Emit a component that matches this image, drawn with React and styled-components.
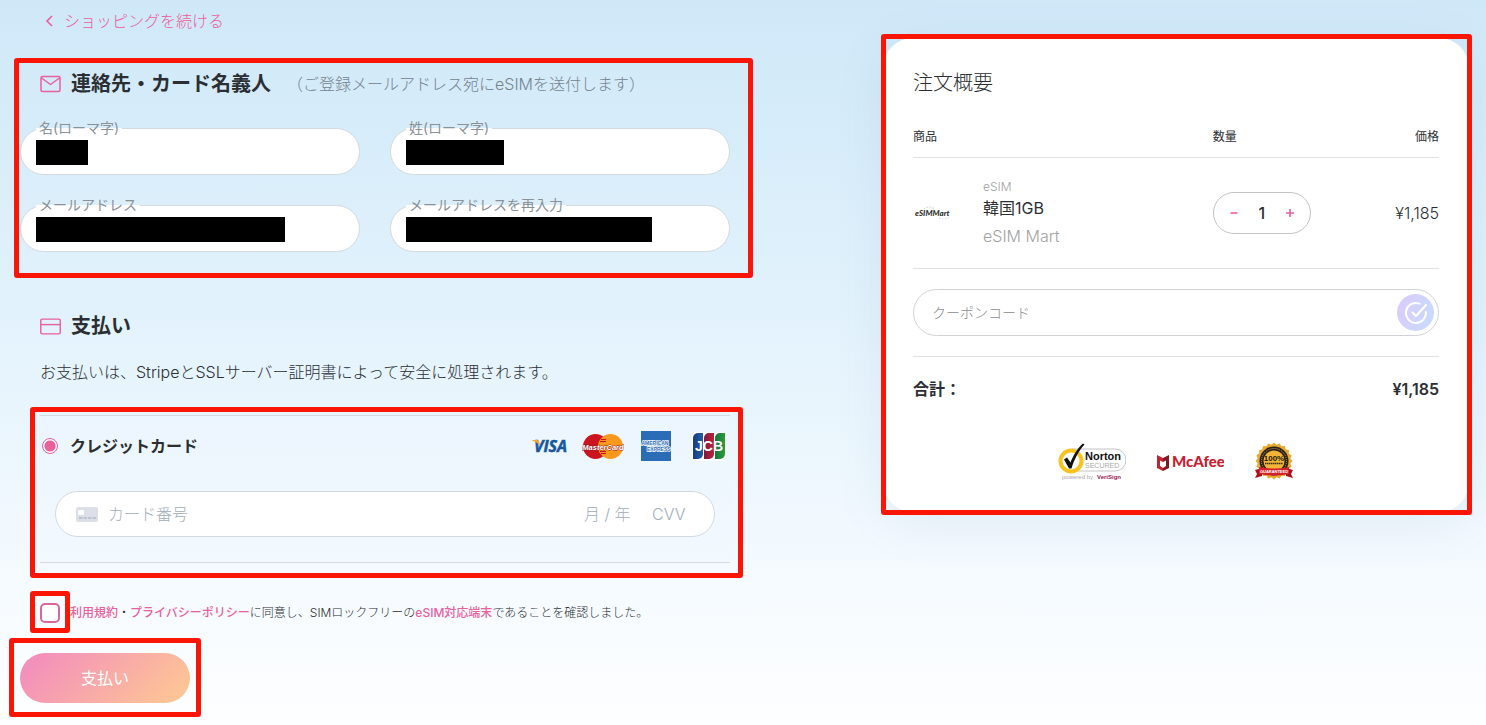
import { useState } from 'react';
import styled, { createGlobalStyle, css } from 'styled-components';

const PINK = '#e8609c';
const LINE = '#d4d9dd';

const GlobalStyle = createGlobalStyle`
  * {
    box-sizing: border-box;
  }

  body {
    margin: 0;
    font-family: Inter, 'Noto Sans CJK JP', sans-serif;
    font-size: 16px;
    font-weight: 300;
    line-height: 24px;
    color: #2b2f33;
  }

  button,
  input {
    font: inherit;
    color: inherit;
  }
`;

// red marker frame drawn over a block
const frame = (top, right, bottom, left) => css`
  position: relative;

  &::after {
    content: '';
    position: absolute;
    top: -${top}px;
    right: -${right}px;
    bottom: -${bottom}px;
    left: -${left}px;
    border: 5px solid #fb1505;
    border-radius: 3px;
    pointer-events: none;
  }
`;

const Page = styled.div`
  display: grid;
  grid-template-columns: 710fr 586fr;
  column-gap: 153px;
  align-items: start;
  min-height: 100vh;
  padding: 0 17px 20px 20px;
  background: linear-gradient(#cfe8f8 0%, #e2f2fc 43%, #f6fbff 82%, #fdfeff 100%);
`;

const Main = styled.main`
  padding-top: 9px;
`;

const BackLink = styled.a`
  display: inline-flex;
  align-items: center;
  gap: 10px;
  margin-left: 24px;
  color: ${PINK};
  text-decoration: none;
  vertical-align: top;
`;

const Contact = styled.section`
  margin-top: 36px;
  ${frame(11, 23, 26, 6)}
`;

const SectionHead = styled.header`
  display: flex;
  align-items: center;
  gap: 10px;
  padding-left: 20px;
  line-height: 30px;
`;

const SectionTitle = styled.h2`
  margin: 0;
  font-size: 20px;
  font-weight: 700;
`;

const Hint = styled.span`
  margin-left: 6px;
  color: #74838f;
`;

const Fields = styled.div`
  display: grid;
  grid-template-columns: 1fr 1fr;
  gap: 30px;
  margin-top: 29px;
`;

const Field = styled.label`
  position: relative;
  display: block;
`;

const FieldName = styled.span`
  position: absolute;
  top: -10px;
  left: 16px;
  padding: 0 3px;
  font-size: 14px;
  font-weight: 400;
  line-height: 20px;
  color: #8a9197;
  background: linear-gradient(transparent 50%, #fff 50%);
`;

const FieldInput = styled.input`
  display: block;
  width: 100%;
  height: 47px;
  padding: 0 20px;
  border: 1px solid ${LINE};
  border-radius: 24px;
  background: #fff;
  outline: none;
`;

const Redaction = styled.span`
  position: absolute;
  top: 12px;
  left: 16px;
  width: ${(p) => p.$width}px;
  height: 25px;
  background: #000;
`;

const Payment = styled.section`
  margin-top: 59px;
`;

const Note = styled.p`
  margin: 19px 0 31px 20px;
`;

const Method = styled.div`
  margin-left: 20px;
  padding: 15px 0 25px;
  border-top: 1px solid ${LINE};
  border-bottom: 1px solid ${LINE};
  background: rgba(240, 246, 255, 0.35);
  ${frame(9, 13, 16, 10)}
`;

const MethodHead = styled.div`
  display: flex;
  align-items: center;
  justify-content: space-between;
  height: 30px;
`;

const MethodLabel = styled.label`
  display: flex;
  align-items: center;
  gap: 12px;
  padding-left: 2px;
  font-weight: 700;
`;

const Radio = styled.input`
  appearance: none;
  width: 16px;
  height: 16px;
  margin: 0;
  border: 1px solid ${PINK};
  border-radius: 50%;
  background: radial-gradient(${PINK} 5px, #fff 6px);
`;

const Brands = styled.div`
  display: flex;
  gap: 11px;
`;

const CardField = styled.div`
  display: flex;
  align-items: center;
  height: 46px;
  margin: 30px 15px 0;
  padding: 0 20px;
  border: 1px solid ${LINE};
  border-radius: 23px;
  background: #fff;
`;

const CardInput = styled.input`
  flex: ${(p) => (p.$width ? 'none' : '1')};
  width: ${(p) => (p.$width ? `${p.$width}px` : 'auto')};
  min-width: 0;
  padding: 0;
  border: 0;
  background: none;
  outline: none;

  &::placeholder {
    color: #a2adb8;
    opacity: 1;
  }
`;

const CardGlyph = styled.svg`
  flex: none;
  margin-right: 10px;
`;

const Terms = styled.div`
  display: flex;
  align-items: center;
  gap: 10px;
  height: 20px;
  margin: 40px 0 30px 20px;
  font-size: 12px;
`;

const TermsBox = styled.span`
  flex: none;
  height: 20px;
  ${frame(12, 10, 10, 10)}
`;

const Checkbox = styled.input`
  appearance: none;
  display: block;
  width: 20px;
  height: 20px;
  margin: 0;
  border: 2px solid #d9679f;
  border-radius: 5px;
  background: #fff;

  &:checked {
    background: ${PINK};
  }
`;

const TermsLink = styled.a`
  font-weight: 500;
  color: ${PINK};
  text-decoration: none;
`;

const PayWrap = styled.div`
  width: fit-content;
  ${frame(15, 11, 14, 11)}
`;

const PayButton = styled.button`
  display: block;
  width: 170px;
  height: 50px;
  border: 0;
  border-radius: 25px;
  color: #fff;
  font-weight: 400;
  background: linear-gradient(135deg, #f390bb 10%, #fdc496 90%);
  cursor: pointer;
`;

const Summary = styled.aside`
  margin-top: 38px;
  padding: 30px;
  border-radius: 30px;
  background: #fff;
  box-shadow: 0 10px 50px rgba(90, 120, 160, 0.1);
  ${frame(4, 3, 3, 2)}
`;

const SummaryTitle = styled.h2`
  margin: 0 0 30px;
  font-size: 20px;
  font-weight: 300;
  line-height: 30px;
`;

const Items = styled.table`
  width: 100%;
  table-layout: fixed;
  border-spacing: 0;
`;

const Th = styled.th`
  width: ${(p) => p.$width};
  padding: 0 0 11px;
  border-bottom: 1px solid #e2e2e2;
  font-size: 12px;
  font-weight: 400;
  line-height: 18px;
  text-align: ${(p) => p.$align || 'left'};
`;

const Td = styled.td`
  padding: 20px 0;
  border-bottom: 1px solid #e2e2e2;
  text-align: ${(p) => p.$align || 'left'};
`;

const Product = styled.div`
  display: grid;
  grid-template-columns: 40px 1fr;
  column-gap: 30px;
  align-items: center;
`;

const Kind = styled.div`
  font-size: 12px;
  line-height: 18px;
  color: #a2a2a2;
`;

const Name = styled.div`
  font-weight: 400;
`;

const Maker = styled.div`
  margin-top: 4px;
  color: #a2a2a2;
`;

const Stepper = styled.div`
  display: flex;
  align-items: center;
  justify-content: space-between;
  width: 98px;
  height: 42px;
  padding: 0 10px;
  border: 1px solid #c4c4c4;
  border-radius: 21px;
  font-weight: 500;
`;

const StepButton = styled.button`
  display: grid;
  place-items: center;
  width: 20px;
  height: 20px;
  padding: 0;
  border: 0;
  background: none;
  cursor: pointer;
`;

const Coupon = styled.form`
  display: flex;
  align-items: center;
  height: 47px;
  margin: 20px 0;
  padding: 0 4px 0 18px;
  border: 1px solid #d0d3d6;
  border-radius: 24px;
`;

const CouponInput = styled.input`
  flex: 1;
  min-width: 0;
  padding: 0;
  border: 0;
  font-size: 14px;
  outline: none;

  &::placeholder {
    color: #8c8c8c;
    opacity: 1;
  }
`;

const CouponButton = styled.button`
  display: grid;
  place-items: center;
  width: 37px;
  height: 37px;
  padding: 0;
  border: 0;
  border-radius: 50%;
  background: linear-gradient(110deg, #dccbfb, #c6dcfc);
  cursor: pointer;
`;

const Total = styled.div`
  display: flex;
  justify-content: space-between;
  padding-top: 20px;
  border-top: 1px solid #e2e2e2;
  font-weight: 600;
`;

const Badges = styled.div`
  display: flex;
  justify-content: center;
  gap: 30px;
  height: 40px;
  margin-top: 41px;
`;

const SANS = "'Liberation Sans', sans-serif";

const ChevronIcon = () => (
  <svg width="10" height="14" viewBox="0 0 10 14" fill="none" stroke={PINK} strokeWidth="1.6">
    <path d="M8 2 3 7l5 5" />
  </svg>
);

const MailIcon = () => (
  <svg width="21" height="18" viewBox="0 0 21 18" fill="none" stroke={PINK} strokeWidth="1.5">
    <rect x="1" y="1.5" width="19" height="15" rx="1.5" />
    <path d="M1.5 3l9 6.5 9-6.5" strokeLinejoin="round" />
  </svg>
);

const CreditIcon = () => (
  <svg width="21" height="17" viewBox="0 0 22 17" fill="none" stroke={PINK} strokeWidth="1.5">
    <rect x=".8" y=".8" width="20.4" height="15.4" rx="1.5" />
    <path d="M1 6.5h20" />
  </svg>
);

const CheckIcon = () => (
  <svg width="24" height="24" viewBox="0 0 24 24" fill="none" stroke="#fff" strokeWidth="2" strokeLinecap="round" strokeLinejoin="round">
    <path d="M15.5 2.6A10 10 0 1 0 21.900 11" />
    <path d="M8.500 11.500l3.500 3.500L22 4" />
  </svg>
);

const MinusIcon = () => (
  <svg width="8" height="8" viewBox="0 0 8 8" stroke={PINK} strokeWidth="1.6">
    <path d="M0.500 4h7" />
  </svg>
);

const PlusIcon = () => (
  <svg width="8" height="8" viewBox="0 0 8 8" stroke={PINK} strokeWidth="1.6">
    <path d="M0 4h8M4 0v8" />
  </svg>
);

const Visa = () => (
  <svg width="42" height="30" viewBox="0 0 42 30" role="img" aria-label="VISA">
    <text x="5" y="21" fontFamily="'Open Sans', sans-serif" fontSize="16" fontWeight="700" fontStyle="italic" fill="#17579f" stroke="#17579f" strokeWidth=".5">
      VISA
    </text>
    <path d="M3 9h5q2 0 2.300 2l.9 4Q8.500 11 3 9.500z" fill="#f2a832" />
  </svg>
);

const MasterCard = () => (
  <svg width="42" height="30" viewBox="0 0 42 30" role="img" aria-label="MasterCard">
    <circle cx="13.500" cy="15.500" r="12.500" fill="#cc1420" />
    <circle cx="28.500" cy="15.500" r="12.500" fill="#f8991d" />
    <path d="M19 8.500h5M18 10.500h6M18 20.500h6M19 22.500h5" stroke="#cc1420" />
    <text x="21" y="18.500" textAnchor="middle" fontFamily={SANS} fontSize="7.500" fontWeight="700" fontStyle="italic" fill="#fff" stroke="#8d1b20" strokeWidth=".8" paintOrder="stroke">
      MasterCard
    </text>
  </svg>
);

const Amex = () => (
  <svg width="42" height="30" viewBox="0 0 42 30" role="img" aria-label="American Express">
    <rect x="6" width="30" height="30" fill="#2a6cb6" />
    <g fontFamily={SANS} fontSize="5" fontWeight="700" fill="#2a6cb6" stroke="#fff" strokeWidth="1.300" paintOrder="stroke">
      <text x="6.500" y="14">AMERICAN</text>
      <text x="12" y="20">EXPRESS</text>
    </g>
  </svg>
);

const Jcb = () => (
  <svg width="42" height="30" viewBox="0 0 42 30" role="img" aria-label="JCB">
    <defs>
      <linearGradient id="jcbBlue"><stop stopColor="#173a80" /><stop offset="1" stopColor="#1f5fa8" /></linearGradient>
      <linearGradient id="jcbRed"><stop stopColor="#7c1c3c" /><stop offset="1" stopColor="#c0203c" /></linearGradient>
      <linearGradient id="jcbGreen"><stop stopColor="#0f7a3c" /><stop offset="1" stopColor="#2f9a3a" /></linearGradient>
    </defs>
    <rect x="4" y="1" width="34" height="29" rx="5" fill="#fff" />
    <path d="M5 7a5 5 0 0 1 5-5h5v21a5 5 0 0 1-5 5H5z" fill="url(#jcbBlue)" />
    <path d="M16 7a5 5 0 0 1 5-5h5v21a5 5 0 0 1-5 5h-5z" fill="url(#jcbRed)" />
    <path d="M27 7a5 5 0 0 1 5-5h5v21a5 5 0 0 1-5 5h-5z" fill="url(#jcbGreen)" />
    <text x="21" y="20" textAnchor="middle" fontFamily={SANS} fontSize="14" fontWeight="700" fill="#fff">
      JCB
    </text>
  </svg>
);

const MartLogo = () => (
  <svg width="40" height="20" viewBox="0 0 40 20" role="img" aria-label="eSIM Mart">
    <text x="2" y="13" fontFamily="Lato, sans-serif" fontSize="8" fontWeight="900" fontStyle="italic" fill="#333">
      eSIMMart
    </text>
    <path d="M11 6q5-4 11 0" fill="none" stroke="#b8c8a0" strokeWidth=".8" strokeDasharray="1.500 1.500" />
    <path d="M26 15q6 2 11-1" fill="none" stroke="#b5c6ea" strokeWidth=".8" strokeDasharray="1.500 1.500" />
  </svg>
);

const Norton = () => (
  <svg width="68" height="40" viewBox="0 0 68 40" role="img" aria-label="Norton Secured">
    <path d="M14 7h43a11 11 0 0 1 0 22H14" fill="none" stroke="#c4c4c4" />
    <circle cx="13" cy="19" r="10.500" fill="#fff" stroke="#f7c31c" strokeWidth="4" />
    <path d="M6 17.500l3-2 3.500 5C15 14 19.500 6 25 1.500l1.500 1C20.500 9 16 18 13.500 26.500H11z" fill="#111" />
    <text x="27" y="18" fontFamily={SANS} fontSize="11" fontWeight="700" fill="#111">Norton</text>
    <text x="27" y="26" fontFamily={SANS} fontSize="7" fill="#a8a8a8">SECURED</text>
    <text x="4" y="37" fontFamily={SANS} fontSize="6" fill="#a8a8a8">powered by</text>
    <text x="39" y="37" fontFamily={SANS} fontSize="6" fontWeight="700" fill="#9b2257">VeriSign</text>
  </svg>
);

const McAfee = () => (
  <svg width="68" height="40" viewBox="0 0 68 40" role="img" aria-label="McAfee">
    <path d="M1 13l6 3v4L4 18.500V24l3 2v3l-6-3z" fill="#c8202f" />
    <path d="M13 13l-6 3v4l3-1.500V24l-3 2v3l6-3z" fill="#7d1a22" />
    <text x="16" y="25" fontFamily="Lato, sans-serif" fontSize="15" fontWeight="900" fill="#c8202f">McAfee</text>
  </svg>
);

const spikes = Array.from({ length: 40 }, (_, i) => {
  const r = i % 2 ? 16.5 : 18.5;
  const a = (i * Math.PI) / 20;
  return `${20 + r * Math.sin(a)},${19 - r * Math.cos(a)}`;
}).join(' ');

const Seal = () => (
  <svg width="40" height="40" viewBox="0 0 40 40" role="img" aria-label="100% guaranteed">
    <polygon points={spikes} fill="#e8a92c" />
    <circle cx="20" cy="19" r="14.500" fill="#2b2118" />
    <circle cx="20" cy="19" r="12.500" fill="none" stroke="#c9a053" strokeWidth="1" strokeDasharray="1 1" />
    <circle cx="20" cy="19" r="10.500" fill="#f0b536" />
    <text x="20" y="19" textAnchor="middle" fontFamily={SANS} fontSize="8" fontWeight="700" fill="#1d1712">100%</text>
    <path d="M11 21.500h18" stroke="#3c2d18" strokeWidth="1.500" strokeDasharray="1.500 .5" />
    <path d="M1 28l7-2v8l-7 2 2-4zM39 28l-7-2v8l7 2-2-4z" fill="#a5131b" />
    <path d="M5 25q15 3 30 0v7q-15 3-30 0z" fill="#d8202a" />
    <text x="20" y="31" textAnchor="middle" fontFamily={SANS} fontSize="4" fontWeight="700" fill="#fff">GUARANTEED</text>
  </svg>
);

const contactFields = [
  { id: 'first', label: '名(ローマ字)', mask: 52 },
  { id: 'last', label: '姓(ローマ字)', mask: 98 },
  { id: 'email', label: 'メールアドレス', mask: 249 },
  { id: 'email2', label: 'メールアドレスを再入力', mask: 246 },
];

const App = () => {
  const [count, setCount] = useState(1);
  const price = `¥${(1185 * count).toLocaleString('en-US')}`;

  return (
    <>
      <GlobalStyle />
      <Page>
        <Main>
          <BackLink href="#shop">
            <ChevronIcon />
            ショッピングを続ける
          </BackLink>

          <Contact>
            <SectionHead>
              <MailIcon />
              <SectionTitle>連絡先・カード名義人</SectionTitle>
              <Hint>（ご登録メールアドレス宛にeSIMを送付します）</Hint>
            </SectionHead>
            <Fields>
              {contactFields.map((field) => (
                <Field key={field.id}>
                  <FieldInput name={field.id} />
                  <FieldName>{field.label}</FieldName>
                  <Redaction $width={field.mask} />
                </Field>
              ))}
            </Fields>
          </Contact>

          <Payment>
            <SectionHead>
              <CreditIcon />
              <SectionTitle>支払い</SectionTitle>
            </SectionHead>
            <Note>お支払いは、StripeとSSLサーバー証明書によって安全に処理されます。</Note>
            <Method>
              <MethodHead>
                <MethodLabel>
                  <Radio type="radio" name="method" defaultChecked />
                  クレジットカード
                </MethodLabel>
                <Brands>
                  <Visa />
                  <MasterCard />
                  <Amex />
                  <Jcb />
                </Brands>
              </MethodHead>
              <CardField>
                <CardGlyph width="22" height="15" viewBox="0 0 22 15">
                  <rect width="22" height="15" rx="2" fill="#dcdfe8" />
                  <rect x="2" y="3" width="6" height="5" rx="1" fill="#fff" />
                  <path d="M3 11h17" stroke="#b3bac8" strokeWidth="1.5" strokeDasharray="3.5 1" />
                </CardGlyph>
                <CardInput placeholder="カード番号" aria-label="カード番号" />
                <CardInput $width={68} placeholder="月 / 年" aria-label="月 / 年" />
                <CardInput $width={42} placeholder="CVV" aria-label="CVV" />
              </CardField>
            </Method>
          </Payment>

          <Terms>
            <TermsBox>
              <Checkbox type="checkbox" id="agree" />
            </TermsBox>
            <label htmlFor="agree">
              <TermsLink href="#terms">利用規約</TermsLink>・
              <TermsLink href="#privacy">プライバシーポリシー</TermsLink>
              に同意し、SIMロックフリーの
              <TermsLink href="#devices">eSIM対応端末</TermsLink>
              であることを確認しました。
            </label>
          </Terms>

          <PayWrap>
            <PayButton type="button">支払い</PayButton>
          </PayWrap>
        </Main>

        <Summary>
          <SummaryTitle>注文概要</SummaryTitle>
          <Items>
            <thead>
              <tr>
                <Th $width="57%">商品</Th>
                <Th $width="25%">数量</Th>
                <Th $width="18%" $align="right">価格</Th>
              </tr>
            </thead>
            <tbody>
              <tr>
                <Td>
                  <Product>
                    <MartLogo />
                    <div>
                      <Kind>eSIM</Kind>
                      <Name>韓国1GB</Name>
                      <Maker>eSIM Mart</Maker>
                    </div>
                  </Product>
                </Td>
                <Td>
                  <Stepper>
                    <StepButton type="button" aria-label="減らす" onClick={() => setCount(Math.max(1, count - 1))}>
                      <MinusIcon />
                    </StepButton>
                    <span>{count}</span>
                    <StepButton type="button" aria-label="増やす" onClick={() => setCount(count + 1)}>
                      <PlusIcon />
                    </StepButton>
                  </Stepper>
                </Td>
                <Td $align="right">{price}</Td>
              </tr>
            </tbody>
          </Items>
          <Coupon onSubmit={(e) => e.preventDefault()}>
            <CouponInput placeholder="クーポンコード" aria-label="クーポンコード" />
            <CouponButton aria-label="適用">
              <CheckIcon />
            </CouponButton>
          </Coupon>
          <Total>
            <span>合計：</span>
            <span>{price}</span>
          </Total>
          <Badges>
            <Norton />
            <McAfee />
            <Seal />
          </Badges>
        </Summary>
      </Page>
    </>
  );
};

export default App;
